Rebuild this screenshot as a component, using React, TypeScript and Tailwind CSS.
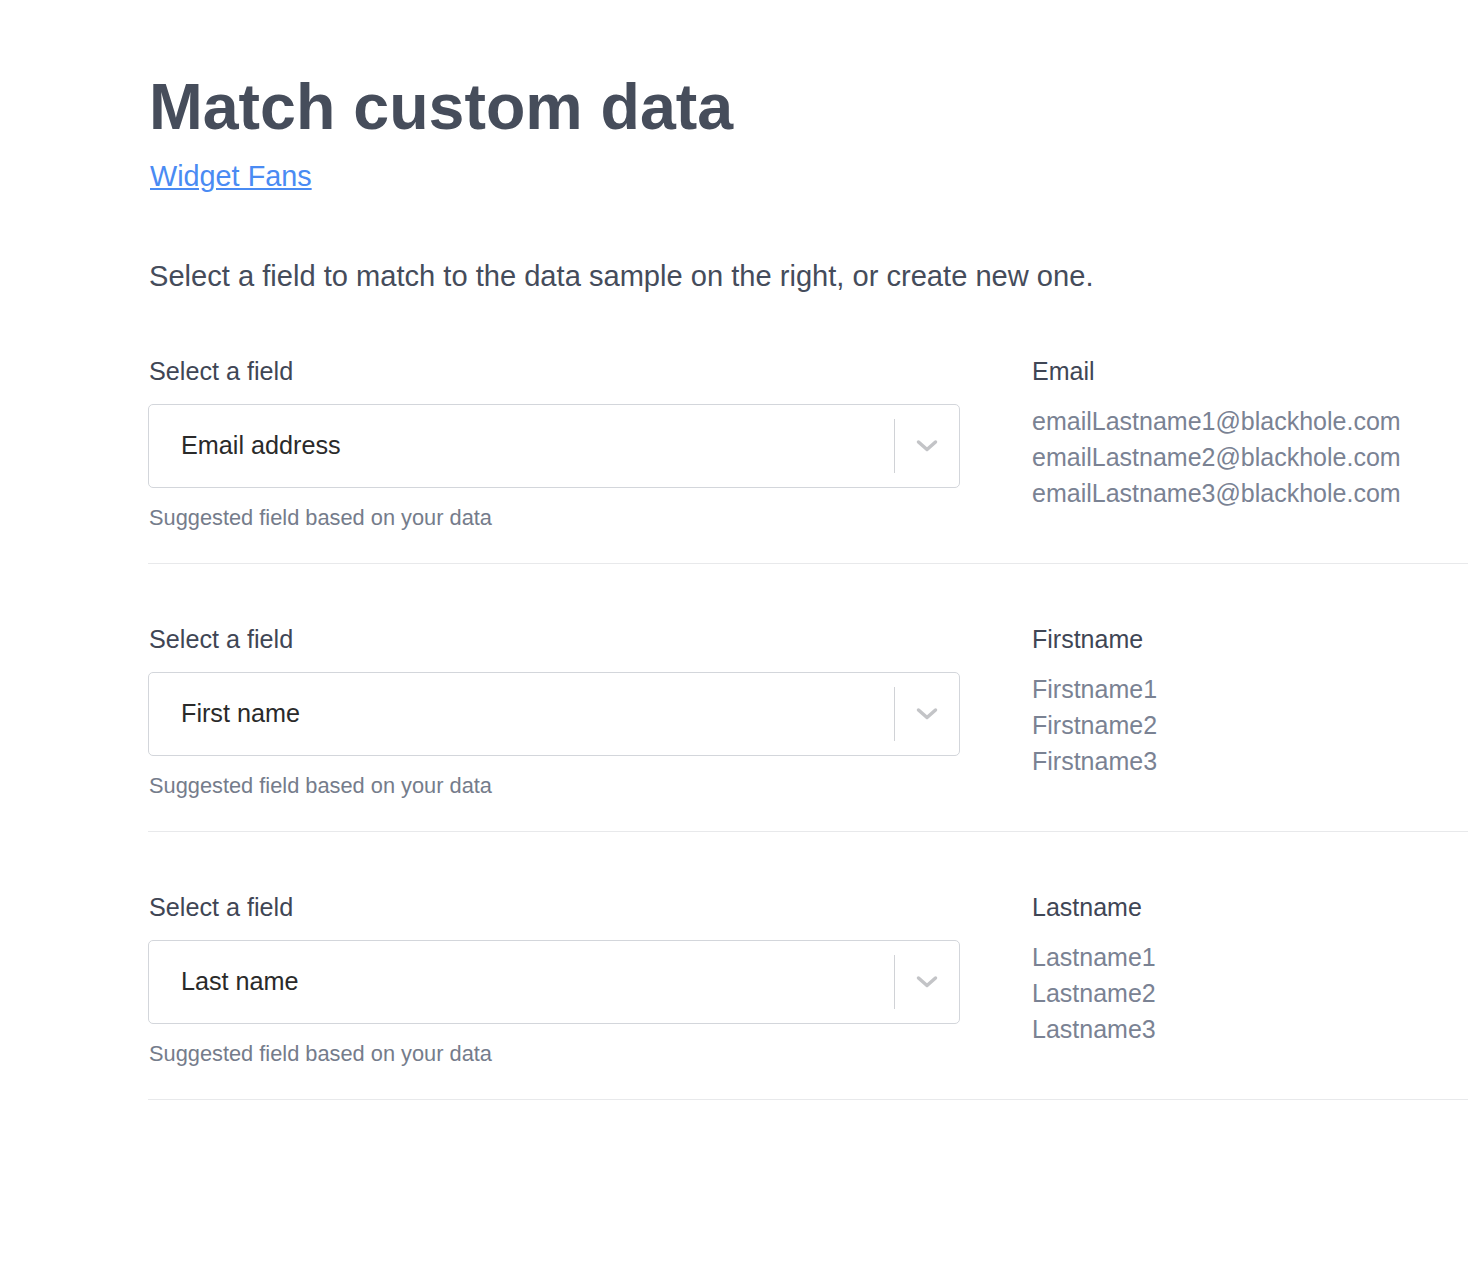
import React from "react";

type Row = { field: string; header: string; values: string[] };

const rows: Row[] = [
  {
    field: "Email address",
    header: "Email",
    values: [
      "emailLastname1@blackhole.com",
      "emailLastname2@blackhole.com",
      "emailLastname3@blackhole.com",
    ],
  },
  { field: "First name", header: "Firstname", values: ["Firstname1", "Firstname2", "Firstname3"] },
  { field: "Last name", header: "Lastname", values: ["Lastname1", "Lastname2", "Lastname3"] },
];

function Chevron() {
  return (
    <svg width="22" height="14" viewBox="0 0 22 14" fill="none">
      <path d="M2.5 3 L11 10.5 L19.5 3" stroke="#c3c4c7" strokeWidth="3.5" strokeLinecap="round" strokeLinejoin="round" />
    </svg>
  );
}

export default function App() {
  return (
    <div className="min-h-[1280px] bg-white font-['Liberation_Sans',Arial,sans-serif] pl-[148px] pt-[75px]">
      <h1 className="text-[64.5px] leading-none font-bold text-[#464d5b] pl-[1px]">Match custom data</h1>
      <a href="#" className="inline-block mt-[18px] pl-[2px] text-[28.8px] leading-[36px] text-[#4a8bf3] underline">
        Widget Fans
      </a>
      <p className="mt-[64px] mb-[2px] pl-[1px] text-[29.1px] leading-[36px] text-[#454c5b]">
        Select a field to match to the data sample on the right, or create new one.
      </p>
      <div>
        {rows.map((r) => (
          <div key={r.header} className="flex gap-[72px] pt-[59px] pb-[31px] border-b border-[#e8e9eb]">
            <div className="w-[812px] shrink-0">
              <div className="pl-[1px] text-[25.2px] leading-[32px] text-[#3f4655]">Select a field</div>
              <div className="mt-[17px] h-[84px] flex items-center rounded-[5px] border border-[#d3d6db] bg-white">
                <div className="flex-1 pl-[32px] text-[25.2px] text-[#2a2a2a]">{r.field}</div>
                <div className="w-px h-[54px] bg-[#d0d2d6]"></div>
                <div className="w-[64px] flex items-center justify-center">
                  <Chevron />
                </div>
              </div>
              <div className="mt-[16px] pl-[1px] text-[21.8px] leading-[28px] text-[#757c8b]">Suggested field based on your data</div>
            </div>
            <div className="flex-1">
              <div className="text-[25px] leading-[32px] text-[#3f4655]">{r.header}</div>
              <div className="mt-[16px]">
                {r.values.map((v) => (
                  <div key={v} className="text-[25px] leading-[36px] text-[#7a8293]">
                    {v}
                  </div>
                ))}
              </div>
            </div>
          </div>
        ))}
      </div>
    </div>
  );
}
